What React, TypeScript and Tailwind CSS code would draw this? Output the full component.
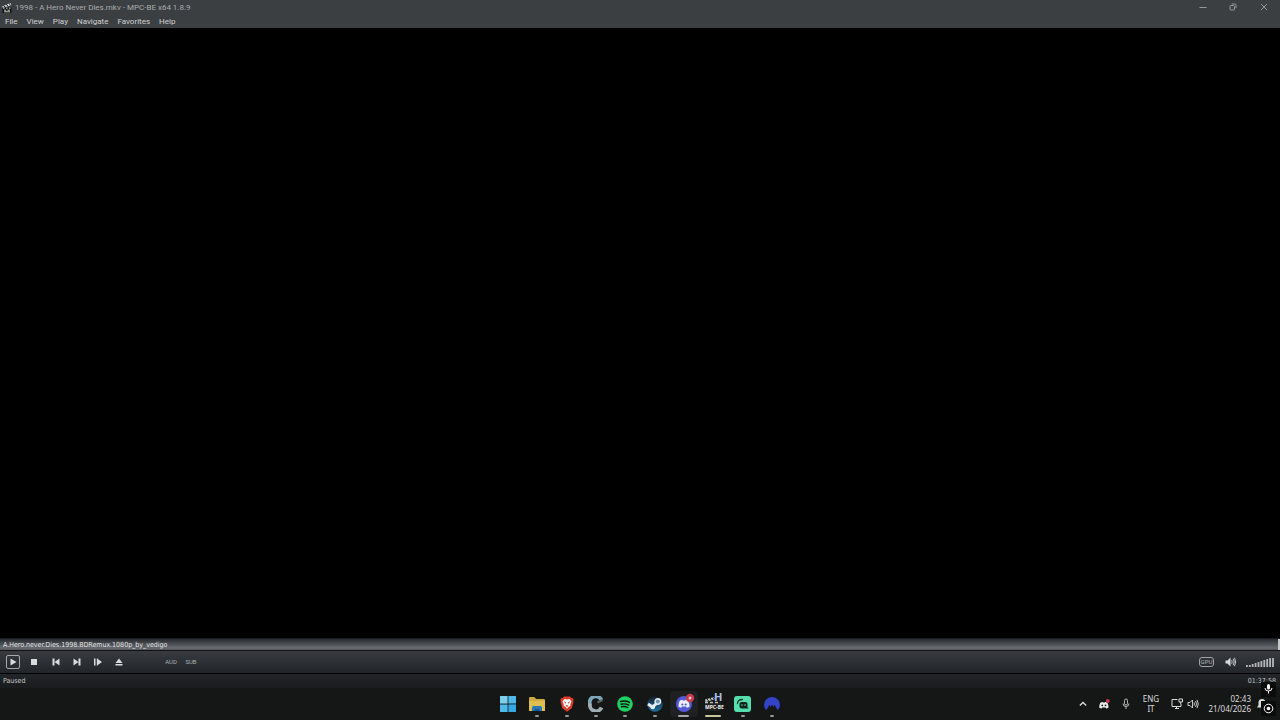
import type { ReactNode } from 'react';

const menus = ['File', 'View', 'Play', 'Navigate', 'Favorites', 'Help'];

const volumeBars = [2, 2, 3, 4, 5, 6, 7, 8, 9, 9];

interface IconButtonProps {
  label: string;
  className: string;
  children: ReactNode;
}

const IconButton = ({ label, className, children }: IconButtonProps) => (
  <button aria-label={label} className={`flex shrink-0 items-center justify-center ${className}`}>
    {children}
  </button>
);

const ClapperIcon = () => (
  <svg width="10" height="10" viewBox="0 0 10 10">
    <path d="M0 3.5 8.5 0l.8 2L1 5z" fill="#e0e0e0" />
    <path d="M1.500 2.800 3.500 4M4.300 1.600l1.800 1.400M7 .6l1.500 1.400" stroke="#111" strokeWidth="1" />
    <rect x=".5" y="4.600" width="9" height="5.400" fill="#111" />
    <path d="M1 5.200h1.500M4 5.200h1.500M7 5.200h1.500M2 7.200h2.200M5.400 7.200H8M2 8.800h6" stroke="#ddd" strokeWidth=".9" />
  </svg>
);

const WindowControls = () => (
  <div className="flex text-[#96989a]">
    <IconButton label="Minimize" className="h-3.5 w-[30px]">
      <svg width="8" height="8" viewBox="0 0 8 8" stroke="currentColor"><path d="M.5 4.500h7" /></svg>
    </IconButton>
    <IconButton label="Restore" className="h-3.5 w-[30px]">
      <svg width="8" height="8" viewBox="0 0 8 8" fill="none" stroke="currentColor">
        <rect x="1" y="2.500" width="4.500" height="4.500" rx="1" />
        <path d="M2.800 1h3a1.200 1.200 0 0 1 1.200 1.200v3" />
      </svg>
    </IconButton>
    <IconButton label="Close" className="h-3.5 w-8">
      <svg width="8" height="8" viewBox="0 0 8 8" stroke="currentColor"><path d="m1 1 6 6M7 1 1 7" /></svg>
    </IconButton>
  </div>
);

const PlayerControls = () => (
  <div className="flex h-[23px] items-center justify-between border-t border-[#111] bg-linear-to-b from-[#383c41] to-[#222529] text-[#d9dbdd]">
    <div className="flex items-center pl-[3px]">
      <IconButton label="Play" className="h-[21px] w-5">
        <svg width="16" height="16" viewBox="0 0 16 16">
          <rect x="1.500" y="1.500" width="13" height="13" rx="1.500" fill="none" stroke="#a6a8aa" />
          <path d="M5.500 4.500 11.500 8l-6 3.500z" fill="currentColor" />
        </svg>
      </IconButton>
      <IconButton label="Stop" className="h-[21px] w-[22px]">
        <svg width="8" height="8" viewBox="0 0 8 8" fill="currentColor"><path d="M1 1h6v6H1z" /></svg>
      </IconButton>
      <IconButton label="Previous" className="h-[21px] w-[22px]">
        <svg width="8" height="8" viewBox="0 0 8 8" fill="currentColor"><path d="M.5.5h2v7h-2zM7.500.5v7L2.500 4z" /></svg>
      </IconButton>
      <IconButton label="Next" className="h-[21px] w-5">
        <svg width="8" height="8" viewBox="0 0 8 8" fill="currentColor"><path d="M5.500.5h2v7h-2zM.5.5v7l5-3.500z" /></svg>
      </IconButton>
      <IconButton label="Step" className="h-[21px] w-[22px]">
        <svg width="8" height="8" viewBox="0 0 8 8" fill="currentColor"><path d="M0 .5h1.500v7H0zM2.800.5h1v7h-1zM3.800 1 8 4 3.800 7z" /></svg>
      </IconButton>
      <IconButton label="Open" className="h-[21px] w-5">
        <svg width="8" height="8" viewBox="0 0 8 8" fill="currentColor"><path d="M4 .5 7.500 5h-7zM.5 6h7v1.500h-7z" /></svg>
      </IconButton>
      <div className="ml-[34px] flex gap-1 font-['Roboto',sans-serif] text-[6px] leading-[8px] text-[#aeb0b3]">
        <button className="w-4">AUD</button>
        <button className="w-4">SUB</button>
      </div>
    </div>
    <div className="flex items-center gap-2.5 pr-1.5">
      <button className="h-[10px] w-[15px] rounded-[3px] border border-[#a0a2a5] font-['Roboto',sans-serif] text-[6px] leading-[8px] text-[#b4b6b9]">GPU</button>
      <IconButton label="Mute" className="h-4 w-3">
        <svg width="11" height="10" viewBox="0 0 11 10" fill="none" stroke="currentColor">
          <path d="M.5 3.500h2L5.500.5v9L2.500 6.500h-2z" fill="currentColor" stroke="none" />
          <path d="M6.700 3.200q1 1.800 0 3.600M8.200 1.800q2 3.200 0 6.400M9.500.8q2.300 4.200 0 8.400" strokeWidth=".9" />
        </svg>
      </IconButton>
      <button aria-label="Volume">
        <svg width="28" height="9" viewBox="0 0 28 9" fill="#b4b6b9">
          {volumeBars.map((h, i) => (
            <rect key={i} x={i * 2.9} y={9 - h} width="1.800" height={h} />
          ))}
        </svg>
      </button>
    </div>
  </div>
);

const WindowsLogo = () => (
  <svg width="16" height="16" viewBox="0 0 16 16" fill="#4fb9ea">
    <path d="M0 0h7.600v7.600H0z" fill="#7bd0ee" />
    <path d="M8.400 0H16v7.600H8.400zM0 8.400h7.600V16H0z" />
    <path d="M8.400 8.400H16V16H8.400z" fill="#35a8e4" />
  </svg>
);

const FolderLogo = () => (
  <svg width="18" height="16" viewBox="0 0 18 16">
    <path d="M1 2.200Q1 1 2.200 1h4l2 2h7.600Q17 3 17 4.200V15H1z" fill="#d1a93c" />
    <path d="M1 5h16v8.800q0 1.200-1.200 1.200H2.200Q1 15 1 13.800z" fill="#dfbf52" />
    <path d="M4 15v-3.500Q4 10 5.500 10h7q1.500 0 1.500 1.500V15z" fill="#2878b8" />
    <path d="M6.500 15v-2h5v2z" fill="#155a94" />
  </svg>
);

const BraveLogo = () => (
  <svg width="16" height="16" viewBox="0 0 16 16">
    <path d="M5 .5h6l1.400 1.500 1.300-.1 1 2-.5 1.300.3 1-1.800 6L8 15.700 3.300 12.200l-1.800-6 .3-1-.5-1.300 1-2L3.600 2z" fill="#dc3b27" />
    <path d="m8 3.500 2.500-.5 2 2.500-1.300 3 .3 1.300L9.400 11 8 12.700 6.600 11 4.500 9.800l.3-1.300-1.300-3 2-2.500z" fill="#fff" />
    <path d="m4.800 5.500 2 .6L7 8zM11.200 5.500l-2 .6L9 8zM6.500 9.800 8 9l1.500.8L8 11z" fill="#dc3b27" />
  </svg>
);

const CLogo = () => (
  <svg width="16" height="16" viewBox="0 0 16 16" fill="none" strokeWidth="3.800">
    <path d="M13.500 4A6 6 0 0 0 2.200 9" stroke="#7ea6b8" />
    <path d="M2.200 7.500a6 6 0 0 0 11.300 4" stroke="#a2adb3" />
    <path d="M9.500 6.500 14.500 4" stroke="#58656c" strokeWidth="2" />
  </svg>
);

const SpotifyLogo = () => (
  <svg width="16" height="16" viewBox="0 0 16 16">
    <circle cx="8" cy="8" r="7.800" fill="#1fcf5f" />
    <path d="M3.500 5.500q5-1.300 9 .9M4 8.200q4.300-1 7.700.9M4.500 10.800q3.500-.8 6.300.7" fill="none" stroke="#111" strokeWidth="1.400" strokeLinecap="round" />
  </svg>
);

const SteamLogo = () => (
  <svg width="16" height="16" viewBox="0 0 16 16">
    <defs>
      <linearGradient id="steam" x2="0" y2="1">
        <stop stopColor="#151c2c" />
        <stop offset="1" stopColor="#1d6f9f" />
      </linearGradient>
    </defs>
    <circle cx="8" cy="8" r="7.800" fill="url(#steam)" />
    <path d="m1 8 4.500 3L10 7" stroke="#e4edf4" strokeWidth="3" fill="none" />
    <circle cx="10.800" cy="5.500" r="2.700" fill="#6e93ad" stroke="#e4edf4" strokeWidth="1.400" />
    <circle cx="5.800" cy="11" r="2.300" fill="#e4edf4" />
  </svg>
);

const discordPath = 'M3.800 4.700q1.200-.7 2.600-.9l.5.800h2.200l.5-.8q1.400.2 2.600.9 1.500 2.600 1.400 5.800-1.200 1-2.800 1.300l-.7-1.200H5.900l-.7 1.200Q3.600 11.500 2.400 10.500 2.300 7.300 3.800 4.700z';

const DiscordLogo = () => (
  <svg width="18" height="18" viewBox="0 0 18 18" className="overflow-visible">
    <circle cx="9" cy="9" r="8" fill="#5358d8" />
    <path d={discordPath} transform="translate(1 1)" fill="#eef" />
    <circle cx="7.300" cy="9.500" r="1.100" fill="#5358d8" />
    <circle cx="10.700" cy="9.500" r="1.100" fill="#5358d8" />
    <circle cx="15" cy="3" r="4.200" fill="#c93a4a" />
    <circle cx="15" cy="3" r="1.500" fill="#f3c9cd" />
  </svg>
);

const PlayerLogo = () => (
  <svg width="18" height="18" viewBox="0 0 18 18" className="overflow-visible">
    <path d="m1 4.500 9-2.500.7 2.200L1.500 7z" fill="#c8c8c8" />
    <path d="m3 4 1.500 2M6 3l1.500 2M9 2.300l1 2" stroke="#111" />
    <path d="M1 7h16v9H1z" fill="#222" />
    <path d="M1 7.500h3M6 7.500h3M11 7.500h3" stroke="#bbb" strokeWidth="1.500" />
    <text x="1" y="14" fontSize="5" fontWeight="700" fill="#eee">MPC-BE</text>
    <text x="10" y="6" fontSize="11" fontWeight="700" fill="#a9c0ee">H</text>
  </svg>
);

const StreamLogo = () => (
  <svg width="17" height="16" viewBox="0 0 17 16">
    <rect width="17" height="16" rx="3" fill="#55dfae" />
    <path d="M3.500 7.500q0-4 5-4" fill="none" stroke="#10382d" strokeWidth="1.300" strokeLinecap="round" />
    <rect x="5.500" y="6" width="8" height="6.500" rx="2" fill="#10251f" />
    <path d="M8 8.300v1.500M11 8.300v1.500" stroke="#55dfae" strokeWidth="1.200" />
    <path d="M12 12h2.500" stroke="#10251f" />
  </svg>
);

const NordLogo = () => (
  <svg width="16" height="16" viewBox="0 0 16 16">
    <path d="M2.200 14.300A7.900 7.900 0 1 1 13.800 14.300L10.500 8.800 9.300 10.900 8 8.500 6.700 10.900 5.500 8.800z" fill="#3443c8" />
  </svg>
);

const apps = [
  { name: 'Start', icon: <WindowsLogo />, box: '', mark: 'w-1 bg-transparent' },
  { name: 'File Explorer', icon: <FolderLogo />, box: '', mark: 'w-1 bg-[#92959a]' },
  { name: 'Brave', icon: <BraveLogo />, box: '', mark: 'w-1 bg-[#92959a]' },
  { name: 'Cider', icon: <CLogo />, box: '', mark: 'w-1 bg-[#92959a]' },
  { name: 'Spotify', icon: <SpotifyLogo />, box: '', mark: 'w-1 bg-[#92959a]' },
  { name: 'Steam', icon: <SteamLogo />, box: '', mark: 'w-1 bg-[#92959a]' },
  { name: 'Discord', icon: <DiscordLogo />, box: 'bg-[#1f2022]', mark: 'w-[11px] bg-[#a7aaa9]' },
  { name: 'MPC-BE', icon: <PlayerLogo />, box: '', mark: 'w-4 bg-[#c8c89a]' },
  { name: 'Streamlabs', icon: <StreamLogo />, box: '', mark: 'w-1 bg-[#92959a]' },
  { name: 'NordVPN', icon: <NordLogo />, box: '', mark: 'w-1 bg-[#92959a]' },
];

const Tray = () => (
  <div className="flex flex-1 items-center justify-end text-[#dcdcdc]">
    <IconButton label="Show hidden icons" className="h-6 w-5">
      <svg width="8" height="6" viewBox="0 0 8 6" fill="none" stroke="currentColor" strokeWidth="1.300"><path d="m.8 4.500 3.200-3 3.200 3" /></svg>
    </IconButton>
    <IconButton label="Discord status" className="h-6 w-[22px]">
      <svg width="12" height="12" viewBox="0 0 16 16">
        <path d={discordPath} transform="translate(-1 1)scale(1.100)" fill="#eee" />
        <circle cx="5.700" cy="9.700" r="1.200" fill="#171717" />
        <circle cx="10" cy="9.700" r="1.200" fill="#171717" />
        <circle cx="13" cy="4" r="2.600" fill="#c93650" />
      </svg>
    </IconButton>
    <IconButton label="Microphone" className="h-6 w-[22px]">
      <svg width="8" height="12" viewBox="0 0 8 12" fill="none" stroke="currentColor" strokeWidth=".8">
        <rect x="2.500" y="1" width="3" height="6" rx="1.500" />
        <path d="M1 5.500Q1 8.500 4 8.500t3-3M4 8.500V11" />
      </svg>
    </IconButton>
    <button className="w-[28px] text-center text-[8px] leading-[10px]">ENG<br />IT</button>
    <button aria-label="Network and sound" className="flex h-6 w-10 items-center justify-center gap-1">
      <svg width="12" height="12" viewBox="0 0 12 12" fill="none" stroke="currentColor">
        <path d="M6.500 1.500H1v7h9V6M4 10.500h4M5.500 8.500v2" />
        <path d="M8 1h3.500v3H8zM9.700 4v2" />
      </svg>
      <svg width="12" height="12" viewBox="0 0 12 12" fill="none" stroke="currentColor" strokeWidth=".9">
        <path d="M1 4.500h2L5.500 2v8L3 7.500H1zM7 4.500q1 1.500 0 3M8.500 3q2 3 0 6M10 1.800q2.600 4.200 0 8.400" />
      </svg>
    </button>
    <button className="w-[46px] text-right text-[8px] leading-[10px]">02:43<br />21/04/2026</button>
    <IconButton label="Notifications" className="mr-[11px] ml-1 h-6 w-3.5">
      <svg width="12" height="12" viewBox="0 0 12 12" fill="currentColor">
        <path d="M1 9.500 2.500 7V4Q3 1 6 1t3.500 3v3L11 9.500zM4.500 10.500h3L6 12z" />
      </svg>
    </IconButton>
  </div>
);

export default function App() {
  return (
    <div className="relative flex min-h-screen flex-col bg-black font-['Noto_Sans','Open_Sans',sans-serif] text-[8px] leading-[12px]">
      <header className="bg-[#3c3f42] font-['Roboto',sans-serif]">
        <div className="flex h-[15px] items-start justify-between text-[#a9abad]">
          <h1 className="flex h-[15px] items-center gap-[3px] pl-0.5">
            <ClapperIcon />
            1998 - A Hero Never Dies.mkv - MPC-BE x64 1.8.9
          </h1>
          <WindowControls />
        </div>
        <nav className="flex h-[13px] gap-[9px] pl-[5px] text-[#cfd1d2]">
          {menus.map((menu) => (
            <button key={menu}>{menu}</button>
          ))}
        </nav>
      </header>

      <main className="flex-1 bg-black" />

      <footer className="border-t border-[#191b1e] font-['DejaVu_Sans_Condensed','DejaVu_Sans',sans-serif] text-[7px]">
        <div className="flex h-[11px] items-center border-r-2 border-[#c4c6c8] bg-linear-to-b from-[#282b30] via-[#66696e] via-80% to-[#55585c] pl-[3px] text-[#e3e4e5]">
          A.Hero.never.Dies.1998.BDRemux.1080p_by_vedigo
        </div>
        <PlayerControls />
        <div className="flex h-[15px] items-center justify-between border-t border-black bg-linear-to-b from-[#22262a] to-[#191b1d] pr-1 pl-[3px] text-[#c4c6c8]">
          <span>Paused</span>
          <span>01:37:58</span>
        </div>
        <div className="flex h-8 items-center bg-[#151616] font-['Noto_Sans','Open_Sans',sans-serif]">
          <div className="flex-1" />
          <div className="flex w-[292px] justify-between">
            {apps.map((app) => (
              <button
                key={app.name}
                aria-label={app.name}
                className={`flex h-[26px] w-7 flex-col items-center justify-between rounded-sm pt-0.5 ${app.box}`}
              >
                <span className="flex h-[22px] items-center">{app.icon}</span>
                <span className={`h-0.5 rounded-full ${app.mark}`} />
              </button>
            ))}
          </div>
          <Tray />
        </div>
      </footer>

      {/* Recording overlay */}
      <div className="absolute right-1 bottom-1 flex flex-col gap-1 text-white">
        <svg width="15" height="15" viewBox="0 0 15 15" fill="none" stroke="currentColor">
          <rect width="15" height="15" fill="#0b0b0b" stroke="none" />
          <rect x="6" y="2" width="3" height="5.500" rx="1.500" fill="currentColor" stroke="none" />
          <path d="M4 6q0 3 3.500 3T11 6M7.500 9v2.500" />
        </svg>
        <svg width="15" height="15" viewBox="0 0 15 15" fill="none" stroke="currentColor">
          <rect width="15" height="15" fill="#0b0b0b" stroke="none" />
          <circle cx="7.500" cy="7.500" r="4.300" />
          <circle cx="7.500" cy="7.500" r="1.800" fill="currentColor" stroke="none" />
        </svg>
      </div>
    </div>
  );
}
